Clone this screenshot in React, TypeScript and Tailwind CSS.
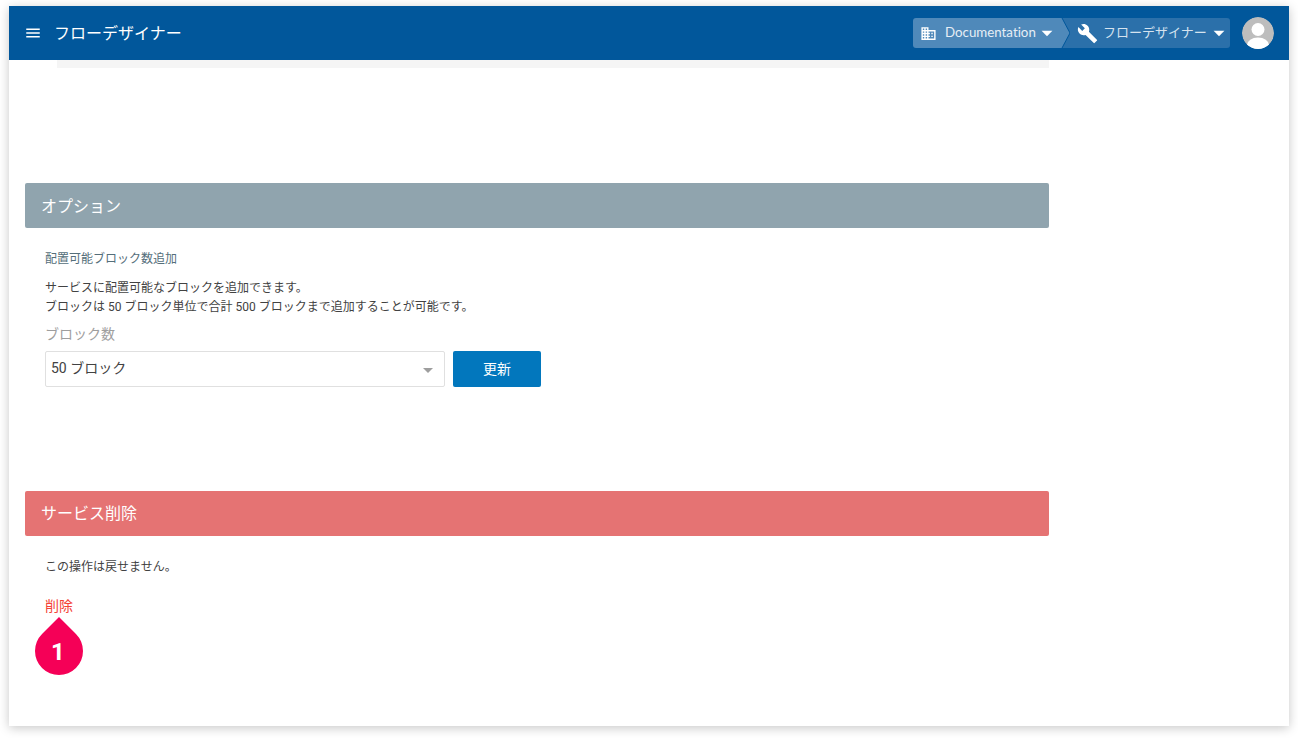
import { MdMenu, MdDomain, MdBuild, MdArrowDropDown } from "react-icons/md";

const font = { fontFamily: '"Roboto", "Noto Sans CJK JP", sans-serif' };
const lato = { fontFamily: '"Lato", "Noto Sans CJK JP", sans-serif' };

function Avatar() {
    return (
        <svg width="32" height="32" viewBox="0 0 32 32" className="rounded-full">
            <circle cx="16" cy="16" r="16" fill="#bdbdbd" />
            <circle cx="16" cy="12.5" r="6.5" fill="#fff" />
            <ellipse cx="16" cy="28" rx="11" ry="7.5" fill="#fff" />
        </svg>
    );
}

function Header() {
    return (
        <header className="h-[54px] bg-[#01579b] flex items-center justify-between pl-[15px] pr-[15px] text-white" style={lato}>
            <div className="flex items-center">
                <MdMenu size={18} />
                <span className="ml-[12px] text-[16px]">フローデザイナー</span>
            </div>
            <div className="flex items-center">
                <div className="flex items-center h-[30px] rounded-[3px] overflow-hidden">
                    <div className="flex items-center h-full w-[148px] pl-[7px] bg-[#4f89ba]">
                        <MdDomain size={17} className="shrink-0" />
                        <span className="ml-[8px] text-[13.3px] text-[#e6eef5] [font-variant-ligatures:none]">Documentation</span>
                        <MdArrowDropDown size={26} className="ml-[-2px] shrink-0" />
                    </div>
                    <svg width="9" height="30" viewBox="0 0 9 30" className="bg-[#2b70aa] shrink-0">
                        <path d="M0 0 L1 0 L9 15 L1 30 L0 30 Z" fill="#4f89ba" />
                        <path d="M1 0 L9 15 L1 30" fill="none" stroke="#01579b" strokeWidth="1" />
                    </svg>
                    <div className="flex items-center h-full w-[160px] pl-[7px] bg-[#2b70aa]">
                        <MdBuild size={21} className="shrink-0" />
                        <span className="ml-[5px] text-[13px] text-[#d5e3ef] whitespace-nowrap shrink-0">フローデザイナー</span>
                        <MdArrowDropDown size={26} className="ml-[-1px] shrink-0" />
                    </div>
                </div>
                <div className="ml-[12px]">
                    <Avatar />
                </div>
            </div>
        </header>
    );
}

export default function App() {
    return (
        <div className="w-[1298px] h-[738px] bg-white overflow-hidden pt-[6px] px-[9px]" style={font}>
            <div className="relative w-[1280px] h-[720px] bg-white shadow-[0_2px_10px_rgba(0,0,0,0.22)]">
                <Header />
                <div className="ml-[48px] w-[992px] h-[8px] bg-[#f5f5f5]" />

                <div className="w-[1024px] ml-[16px] mt-[115px]">
                    <div className="h-[45px] bg-[#90a4ae] rounded-[2px] flex items-center pl-[16px] pt-[2px] text-white text-[16px]">
                        オプション
                    </div>
                    <div className="pl-[20px]">
                        <div className="mt-[23px] text-[12px] leading-[16px] text-[#546e7a]">配置可能ブロック数追加</div>
                        <div className="mt-[12px] text-[12px] leading-[19px] text-[#424242]">
                            <p>サービスに配置可能なブロックを追加できます。</p>
                            <p>ブロックは 50 ブロック単位で合計 500 ブロックまで追加することが可能です。</p>
                        </div>
                        <div className="mt-[8px] text-[14px] leading-[18px] text-[#9e9e9e]">ブロック数</div>
                        <div className="mt-[8px] flex items-center gap-[8px]">
                            <div className="w-[400px] h-[36px] border border-[#e0e0e0] rounded-[2px] flex items-center justify-between pl-[5px] pr-[11px] pb-[1px] text-[14px] text-[#424242]">
                                <span>50 ブロック</span>
                                <div className="w-0 h-0 border-x-[5px] border-x-transparent border-t-[5px] border-t-[#9e9e9e] mt-[3px]" />
                            </div>
                            <button className="w-[88px] h-[36px] bg-[#0277bd] rounded-[2px] text-white text-[14px]">更新</button>
                        </div>
                    </div>
                </div>

                <div className="w-[1024px] ml-[16px] mt-[104px]">
                    <div className="h-[45px] bg-[#e57373] rounded-[2px] flex items-center pl-[16px] text-white text-[16px]">
                        サービス削除
                    </div>
                    <div className="pl-[20px]">
                        <div className="mt-[22px] text-[12px] leading-[18px] text-[#424242]">この操作は戻せません。</div>
                        <div className="mt-[21px] text-[14px] leading-[18px] text-[#f44336]">削除</div>
                    </div>
                </div>

                <div className="absolute left-[26px] top-[621px] w-[48px] h-[48px] rotate-45 rounded-full rounded-tl-none bg-[#f50057]" />
                <div className="absolute left-[25px] top-[622px] w-[48px] h-[48px] flex items-center justify-center text-white text-[24px] font-bold">
                    1
                </div>
            </div>
        </div>
    );
}
